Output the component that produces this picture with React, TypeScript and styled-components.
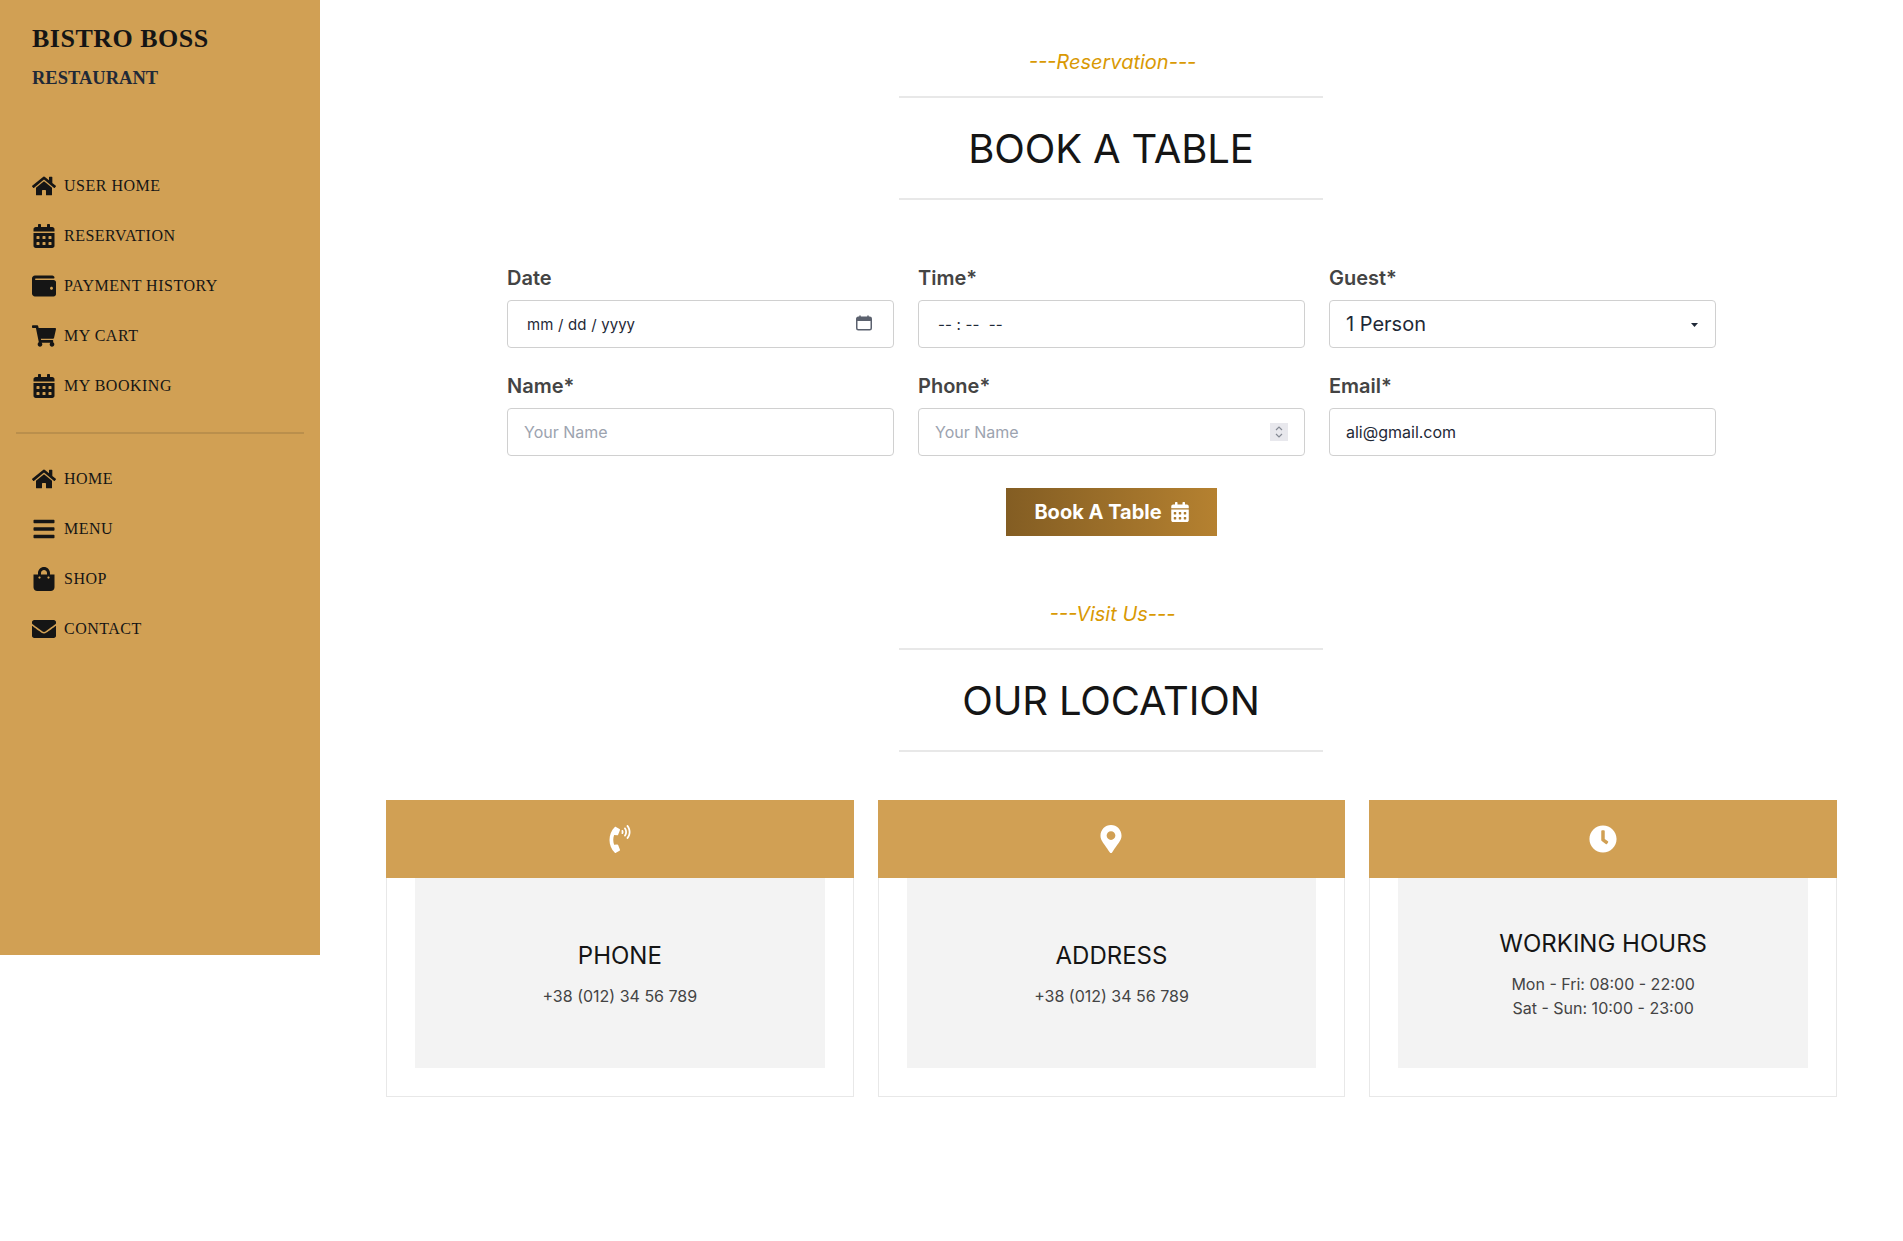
import React from "react";
import styled, { createGlobalStyle } from "styled-components";
import {
  FaHome, FaCalendarAlt, FaWallet, FaShoppingCart, FaBars, FaShoppingBag, FaEnvelope,
  FaPhoneVolume, FaMapMarkerAlt, FaClock,
} from "react-icons/fa";

const Global = createGlobalStyle`
  html, body { margin: 0; padding: 0; background: #fff; }
  body { font-family: Inter, "Liberation Sans", sans-serif; color: #151515; }
  * { box-sizing: border-box; }
`;

const Page = styled.div`
  display: flex;
  align-items: flex-start;
  min-height: 1241px;
`;

const Sidebar = styled.aside`
  width: 320px;
  height: 955px;
  flex: none;
  background: #d1a054;
  padding: 24px 16px 0;
`;

const Brand = styled.div`
  padding: 0 16px;
  height: 122px;
  font-family: "Liberation Serif", serif;
  text-transform: uppercase;
`;

const BrandName = styled.div`
  font-size: 26px;
  line-height: 30px;
  font-weight: 700;
  letter-spacing: 0.5px;
  color: #151515;
`;

const BrandSub = styled.div`
  margin-top: 11px;
  font-size: 18.5px;
  line-height: 26px;
  font-weight: 700;
  color: #1f2937;
`;

const NavList = styled.nav`
  display: flex;
  flex-direction: column;
`;

const UserNav = styled(NavList)`
  padding-top: 15px;
`;

const NavItem = styled.a`
  display: flex;
  align-items: center;
  gap: 8px;
  height: 50px;
  padding: 0 16px;
  font-family: "Liberation Serif", serif;
  font-size: 16px;
  letter-spacing: 0.5px;
  color: #151515;
  text-transform: uppercase;
  svg { width: 24px; height: 24px; flex: none; }
`;

const Divider = styled.hr`
  margin: 21px 0 20px;
  border: 0;
  height: 2px;
  background: rgba(21, 21, 21, 0.12);
`;

const Main = styled.main`
  flex: 1;
  min-width: 0;
  display: flex;
  flex-direction: column;
  align-items: center;
  padding: 48px 1px 0 0;
`;

const Heading = styled.header`
  width: 424px;
  text-align: center;
`;

const Tag = styled.p`
  margin: 0 0 20px;
  padding-left: 3px;
  font-size: 20px;
  line-height: 28px;
  font-style: italic;
  color: #d99904;
`;

const Title = styled.h2`
  margin: 0;
  padding: 21px 0 19px;
  border-top: 2px solid #e8e8e8;
  border-bottom: 2px solid #e8e8e8;
  font-size: 40px;
  line-height: 60px;
  font-weight: 400;
  letter-spacing: -0.15px;
  color: #151515;
`;

const Form = styled.form`
  width: 1209px;
  margin: 40px 0 0 1px;
  display: flex;
  flex-direction: column;
  align-items: center;
`;

const FieldGrid = styled.div`
  width: 100%;
  display: grid;
  grid-template-columns: repeat(3, 1fr);
  column-gap: 24px;
`;

const Field = styled.label`
  display: block;
`;

const FieldLabel = styled.span`
  display: block;
  padding: 24px 0 8px;
  font-size: 20px;
  line-height: 28px;
  font-weight: 600;
  color: #444;
`;

const Control = styled.div`
  position: relative;
`;

const Input = styled.input`
  display: block;
  width: 100%;
  height: 48px;
  padding: 0 16px;
  border: 1px solid #d0d0d0;
  border-radius: 4px;
  background: #fff;
  font-family: Inter, sans-serif;
  font-size: 16px;
  color: #1f2937;
  outline: none;
  appearance: textfield;
  &::placeholder { color: #9ca3af; opacity: 1; }
  &::-webkit-inner-spin-button { appearance: none; margin: 0; }
`;

const DateTimeInput = styled(Input)`
  padding-left: 19px;
  font-size: 15px;
  word-spacing: 0.5px;
`;

const Select = styled.select`
  display: block;
  width: 100%;
  height: 48px;
  padding: 0 16px;
  border: 1px solid #d0d0d0;
  border-radius: 4px;
  background: #fff;
  font-family: Inter, sans-serif;
  font-size: 20px;
  color: #1f2937;
  outline: none;
  appearance: none;
`;

const CalendarGlyph = styled.svg`
  position: absolute;
  top: 15px;
  right: 22px;
  width: 16px;
  height: 16px;
  pointer-events: none;
`;

const SpinnerBox = styled.span`
  position: absolute;
  top: 15px;
  right: 17px;
  width: 18px;
  height: 18px;
  background: #e8e8ed;
  display: flex;
  align-items: center;
  justify-content: center;
  pointer-events: none;
  svg { width: 8px; height: 14px; }
`;

const SelectArrow = styled.svg`
  position: absolute;
  top: 23px;
  right: 18px;
  width: 7px;
  height: 4px;
  pointer-events: none;
`;

const Submit = styled.button`
  margin-top: 32px;
  width: 211px;
  height: 48px;
  display: flex;
  align-items: center;
  justify-content: center;
  gap: 9px;
  border: 0;
  background: linear-gradient(90deg, #835d23 0%, #b58130 100%);
  color: #fff;
  font-family: Inter, sans-serif;
  font-size: 20px;
  font-weight: 700;
  svg { width: 18px; height: 20px; }
`;

const VisitSection = styled.section`
  margin-top: 64px;
  display: flex;
  flex-direction: column;
  align-items: center;
`;

const Cards = styled.div`
  width: 1451px;
  margin: 48px 0 0 1px;
  display: grid;
  grid-template-columns: repeat(3, 1fr);
  gap: 24px;
`;

const Card = styled.article`
  display: flex;
  flex-direction: column;
`;

const CardHead = styled.div`
  height: 78px;
  background: #d1a054;
  display: flex;
  align-items: center;
  justify-content: center;
  color: #fff;
  svg { width: 28px; height: 28px; }
`;

const CardBody = styled.div`
  height: 219px;
  padding: 0 28px 28px;
  border: 1px solid #e8e8e8;
  border-top: 0;
  display: flex;
`;

const CardPanel = styled.div`
  flex: 1;
  background: #f3f3f3;
  padding-top: 2px;
  display: flex;
  flex-direction: column;
  align-items: center;
  justify-content: center;
  text-align: center;
`;

const CardTitle = styled.h3`
  margin: 0 0 12px;
  font-size: 24px;
  line-height: 32px;
  font-weight: 400;
  color: #151515;
`;

const CardLine = styled.p`
  margin: 0;
  font-size: 16px;
  line-height: 24px;
  color: #444;
`;

const userLinks = [
  { label: "User Home", Icon: FaHome },
  { label: "Reservation", Icon: FaCalendarAlt },
  { label: "Payment History", Icon: FaWallet },
  { label: "My Cart", Icon: FaShoppingCart },
  { label: "My Booking", Icon: FaCalendarAlt },
];

const siteLinks = [
  { label: "Home", Icon: FaHome },
  { label: "Menu", Icon: FaBars },
  { label: "Shop", Icon: FaShoppingBag },
  { label: "Contact", Icon: FaEnvelope },
];

const infoCards = [
  { title: "Phone", Icon: FaPhoneVolume, lines: ["+38 (012) 34 56 789"] },
  { title: "Address", Icon: FaMapMarkerAlt, lines: ["+38 (012) 34 56 789"] },
  { title: "Working Hours", Icon: FaClock, lines: ["Mon - Fri: 08:00 - 22:00", "Sat - Sun: 10:00 - 23:00"] },
];

export default function App() {
  return (
    <Page>
      <Global />
      <Sidebar>
        <Brand>
          <BrandName>Bistro Boss</BrandName>
          <BrandSub>Restaurant</BrandSub>
        </Brand>
        <UserNav>
          {userLinks.map(({ label, Icon }) => (
            <NavItem key={label}><Icon />{label}</NavItem>
          ))}
        </UserNav>
        <Divider />
        <NavList>
          {siteLinks.map(({ label, Icon }) => (
            <NavItem key={label}><Icon />{label}</NavItem>
          ))}
        </NavList>
      </Sidebar>
      <Main>
        <Heading>
          <Tag>---Reservation---</Tag>
          <Title>BOOK A TABLE</Title>
        </Heading>
        <Form>
          <FieldGrid>
            <Field>
              <FieldLabel>Date</FieldLabel>
              <Control>
                <DateTimeInput type="text" defaultValue="mm / dd / yyyy" />
                <CalendarGlyph viewBox="0 0 16 16" fill="none">
                  <rect x="0.75" y="2.25" width="14.5" height="12.5" rx="1.5" stroke="#5b616e" strokeWidth="1.5" />
                  <path d="M1 3h14v3H1z" fill="#5b616e" />
                  <path d="M4 0.5v2.5M12 0.5v2.5" stroke="#5b616e" strokeWidth="1.5" />
                </CalendarGlyph>
              </Control>
            </Field>
            <Field>
              <FieldLabel>Time*</FieldLabel>
              <DateTimeInput type="text" defaultValue="-- : --  --" />
            </Field>
            <Field>
              <FieldLabel>Guest*</FieldLabel>
              <Control>
                <Select defaultValue="1"><option value="1">1 Person</option><option value="2">2 People</option></Select>
                <SelectArrow viewBox="0 0 7 4"><path d="M0 0h7L3.5 4z" fill="#1f2937" /></SelectArrow>
              </Control>
            </Field>
            <Field><FieldLabel>Name*</FieldLabel><Input type="text" placeholder="Your Name" /></Field>
            <Field>
              <FieldLabel>Phone*</FieldLabel>
              <Control>
                <Input type="number" placeholder="Your Name" />
                <SpinnerBox>
                  <svg viewBox="0 0 8 14" fill="none" stroke="#858a94" strokeWidth="1.2">
                    <path d="M1 5l3-3 3 3M1 9l3 3 3-3" />
                  </svg>
                </SpinnerBox>
              </Control>
            </Field>
            <Field><FieldLabel>Email*</FieldLabel><Input type="email" defaultValue="ali@gmail.com" /></Field>
          </FieldGrid>
          <Submit type="button">Book A Table <FaCalendarAlt /></Submit>
        </Form>
        <VisitSection>
          <Heading>
            <Tag>---Visit Us---</Tag>
            <Title>OUR LOCATION</Title>
          </Heading>
          <Cards>
            {infoCards.map(({ title, Icon, lines }) => (
              <Card key={title}>
                <CardHead><Icon /></CardHead>
                <CardBody>
                  <CardPanel>
                    <CardTitle>{title.toUpperCase()}</CardTitle>
                    {lines.map((l) => <CardLine key={l}>{l}</CardLine>)}
                  </CardPanel>
                </CardBody>
              </Card>
            ))}
          </Cards>
        </VisitSection>
      </Main>
    </Page>
  );
}
